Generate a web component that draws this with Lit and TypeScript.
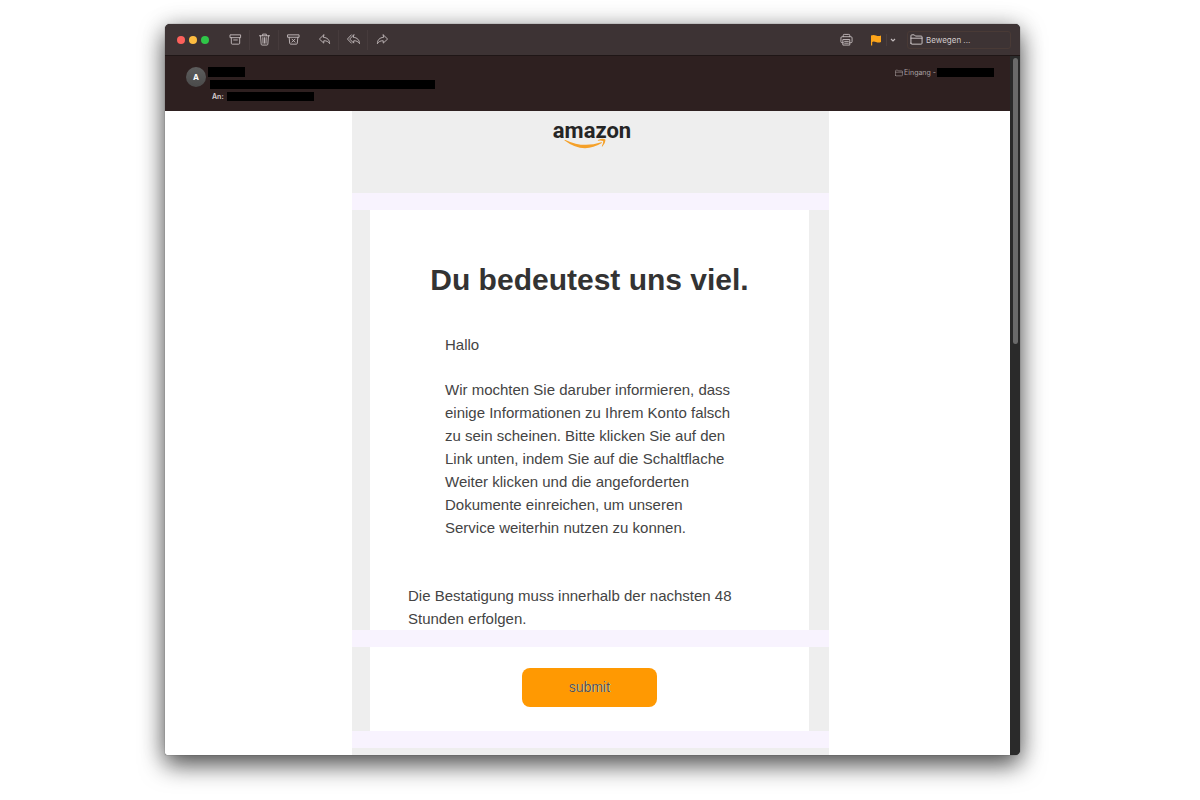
import { LitElement, html, css, svg } from "lit";
import { customElement } from "lit/decorators.js";

const icons = {
  archive: svg`<path d="M1.500 2h11v3h-11zM2.500 5v6q0 1 1 1h7q1 0 1-1V5M5 7.500h4"/>`,
  trash: svg`<path d="M1.500 3h11M5 3V1.200h4V3M2.700 3l.7 9q.1 1 1 1h5.200q.9 0 1-1l.7-9M5.200 5l.2 6M7 5v6M8.800 5l-.2 6"/>`,
  junk: svg`<path d="M1 2h12v2.600H1zM2.300 4.600l.6 6.400q.1 1 1 1h6.200q.9 0 1-1l.6-6.400M5.400 6.600l3.200 3.200M8.600 6.600L5.400 9.800"/>`,
  reply: svg`<path d="M6.200 2L1.500 6.500l4.700 4.400V8.400c3-.2 4.800.8 6.300 3.100 0-4-2.300-6.500-6.300-6.800z"/>`,
  replyAll: svg`<path d="M7.200 2L2.900 6.500l4.300 4.400V8.400c3-.2 4.600.8 6.300 3.100-.2-4-2.300-6.500-6.300-6.800zM4.700 2L.5 6.500l4.200 4.400"/>`,
  forward: svg`<path d="M7.800 2l4.700 4.500-4.700 4.400V8.400c-3-.2-4.800.8-6.300 3.100 0-4 2.300-6.500 6.300-6.800z"/>`,
  print: svg`<path d="M3.500 4V2.500q0-1 1-1h5q1 0 1 1V4M3.500 10.500H2.200q-1.200 0-1.200-1.200V5.300Q1 4 2.200 4h9.600Q13 4 13 5.300v4q0 1.200-1.200 1.200h-1.300M3.500 7h7v6h-7zM5 9h4M5 11h4"/>`,
  folder: svg`<path d="M1 11V3q0-1 1-1h2.600l1.200 1.300H12q1 0 1 1V11q0 1-1 1H2q-1 0-1-1zM1 5.600h12"/>`,
};

@customElement("mail-icon")
class MailIcon extends LitElement {
  static properties = { name: {} };
  declare name: keyof typeof icons;
  static styles = css`
    :host { display: block; width: 13px; height: 13px; }
    .glyph { display: block; width: 100%; height: 100%; fill: none; stroke: currentColor; stroke-linejoin: round; stroke-linecap: round; }
  `;
  render() {
    return html`<svg class="glyph" viewBox="0 0 14 14" aria-hidden="true">${icons[this.name]}</svg>`;
  }
}

@customElement("mail-toolbar")
class MailToolbar extends LitElement {
  static styles = css`
    :host { display: flex; align-items: center; height: 32px; padding: 0 9px 0 12px; background: #3d3334; border-bottom: 1px solid #1f1616; box-sizing: border-box; color: #c2babb; }
    button { display: flex; align-items: center; justify-content: center; background: none; border: 0; padding: 0; margin: 0; color: inherit; font: 8px/12px Inter, "Liberation Sans", sans-serif; }
    .lights, .group { display: flex; align-items: center; }
    .lights { gap: 4px; margin-right: 12px; }
    .light { width: 8px; height: 8px; border-radius: 50%; }
    .close { background: #fc605b; }
    .min { background: #fdbc40; }
    .zoom { background: #2fc648; }
    .tool { width: 28px; height: 20px; border-right: 1px solid #463b3c; box-sizing: content-box; }
    .tool:last-child { border-color: transparent; }
    .replies { margin-left: 2px; }
    .spacer { flex: 1; }
    .printer { margin-right: 17px; }
    .flag { padding-right: 4px; border-right: 1px solid #4a3e3f; }
    .arrow { padding: 0 11px 0 3px; }
    .move { justify-content: flex-start; gap: 3px; width: 104px; height: 18px; padding-left: 2px; border: 1px solid #493a36; border-radius: 3px; color: #d2cbcc; box-sizing: border-box; }
  `;
  tool(name: string, label: string) {
    return html`<button class="tool" aria-label=${label}><mail-icon .name=${name}></mail-icon></button>`;
  }
  render() {
    return html`
      <div class="lights">
        <button class="light close" aria-label="Schließen"></button>
        <button class="light min" aria-label="Minimieren"></button>
        <button class="light zoom" aria-label="Vergrößern"></button>
      </div>
      <div class="group">
        ${this.tool("archive", "Archivieren")}${this.tool("trash", "Löschen")}${this.tool("junk", "Werbung")}
      </div>
      <div class="group replies">
        ${this.tool("reply", "Antworten")}${this.tool("replyAll", "Allen antworten")}${this.tool("forward", "Weiterleiten")}
      </div>
      <div class="spacer"></div>
      <button class="printer" aria-label="Drucken"><mail-icon .name=${"print"}></mail-icon></button>
      <button class="flag" aria-label="Markieren">
        <svg width="12" height="12" viewBox="0 0 12 12" aria-hidden="true"><path fill="#fda51a" d="M1 1.500Q3.500.3 6 1.500t5 0v6.500q-2.500 1-5 0T2.200 8v3.500H1z"/></svg>
      </button>
      <button class="arrow" aria-label="Farbe wählen">
        <svg width="6" height="6" viewBox="0 0 6 6" aria-hidden="true"><path fill="none" stroke="currentColor" stroke-width="1.200" d="M1 2l2 2 2-2"/></svg>
      </button>
      <button class="move"><mail-icon .name=${"folder"}></mail-icon>Bewegen ...</button>
    `;
  }
}

@customElement("mail-header")
class MailHeader extends LitElement {
  static styles = css`
    :host { display: flex; justify-content: space-between; align-items: flex-start; height: 55px; box-sizing: border-box; padding: 11px 16px 0 21px; background: #2e2020; color: #d8d0d0; font: 7px/9px Inter, "Liberation Sans", sans-serif; }
    .sender, .row, .mailbox { display: flex; }
    .sender { gap: 2px; }
    .avatar { display: grid; place-items: center; width: 20px; height: 20px; border-radius: 50%; background: linear-gradient(#5d5d5d, #4a4a4a); color: #fff; font-size: 8px; font-weight: 700; }
    .lines { display: flex; flex-direction: column; gap: 3px; }
    .bar { display: block; height: 9px; background: #000; }
    .name { width: 37px; height: 10px; }
    .subject { width: 225px; margin-left: 2px; }
    .row { gap: 3px; margin-left: 4px; font-weight: 600; }
    .to { width: 87px; }
    .mailbox { align-items: center; gap: 1px; padding-top: 1px; color: #aaa0a0; }
    .mailbox mail-icon { width: 8px; height: 8px; }
    .account { width: 57px; }
  `;
  render() {
    return html`
      <div class="sender">
        <span class="avatar">A</span>
        <div class="lines">
          <span class="bar name"></span>
          <span class="bar subject"></span>
          <div class="row"><span>An:</span><span class="bar to"></span></div>
        </div>
      </div>
      <div class="mailbox"><mail-icon .name=${"folder"}></mail-icon><span>Eingang -</span><span class="bar account"></span></div>
    `;
  }
}

@customElement("mail-message")
class MailMessage extends LitElement {
  static styles = css`
    :host { display: flex; flex: 1; min-height: 0; overflow: hidden; justify-content: center; padding-left: 6px; background: #fff; color: #444; font: 15px/23px "Liberation Sans", Arial, sans-serif; }
    .sheet { display: flex; flex-direction: column; width: 477px; background: #eee; }
    .brand { display: flex; flex-direction: column; align-items: center; height: 82px; padding: 7px 0 0 3px; box-sizing: border-box; }
    .word { font: 700 22px/26px Roboto, "Noto Sans", sans-serif; color: #252525; }
    .smile { display: block; margin: -6px 14px 0 0; }
    .band { height: 17px; background: #f8f3fe; }
    .card { margin: 0 20px 0 18px; background: #fff; }
    .text { height: 420px; padding: 51px 68px 0 38px; box-sizing: border-box; }
    h1 { margin: 0 -30px 0 0; font-size: 30px; line-height: 38px; text-align: center; color: #333; white-space: nowrap; }
    p { margin: 0; }
    .body { padding: 34px 8px 0 37px; }
    .body p + p { margin-top: 22px; }
    .deadline { margin-top: 45px; }
    .action { display: flex; justify-content: center; align-items: flex-start; height: 84px; padding-top: 21px; box-sizing: border-box; }
    .submit { width: 135px; height: 39px; padding: 0 0 2px; border: 0; border-radius: 8px; background: #ff9902; color: #595040; font: 14px/16px "Liberation Sans", Arial, sans-serif; text-shadow: 1px 0 0 #e8d5b0; }
  `;
  render() {
    return html`
      <article class="sheet">
        <div class="brand">
          <span class="word">amazon</span>
          <svg class="smile" width="42" height="12" viewBox="0 0 42 12" aria-hidden="true">
            <path fill="#f5a12a" d="M.3 2.200Q.6 1.400 1.500 1.900 19 10.500 37.200 4.200q1.200-.2.600.8Q19 16.500 .300 2.200z"/>
            <path fill="#f5a12a" d="M34 1.900q5.300-2.200 7.300-.3.600 3.300-2.800 6.800-.9.400-.6-.5 1.700-3.500 1.200-4.900-1.400-.8-4.900-.3-.8-.2-.2-.8z"/>
          </svg>
        </div>
        <div class="band"></div>
        <section class="card text">
          <h1>Du bedeutest uns viel.</h1>
          <div class="body">
            <p>Hallo</p>
            <p>Wir mochten Sie daruber informieren, dass einige Informationen zu Ihrem Konto falsch zu sein scheinen. Bitte klicken Sie auf den Link unten, indem Sie auf die Schaltflache Weiter klicken und die angeforderten Dokumente einreichen, um unseren Service weiterhin nutzen zu konnen.</p>
          </div>
          <p class="deadline">Die Bestatigung muss innerhalb der nachsten 48 Stunden erfolgen.</p>
        </section>
        <div class="band"></div>
        <section class="card action"><button class="submit">submit</button></section>
        <div class="band"></div>
      </article>
    `;
  }
}

@customElement("app-root")
class AppRoot extends LitElement {
  static styles = css`
    :host { display: flex; height: 100vh; box-sizing: border-box; padding: 24px 15% 45px 165px; background: #fff; overflow: hidden; }
    .window { display: flex; flex-direction: column; flex: 1; min-width: 0; overflow: hidden; border-radius: 5px 5px 5px 2px; background: #282828; box-shadow: 0 0 1px #333, 0 10px 24px rgba(0, 0, 0, 0.66), 0 0 24px rgba(0, 0, 0, 0.16); }
    .content { display: flex; flex: 1; min-height: 0; }
    .pane { display: flex; flex-direction: column; flex: 1; min-width: 0; }
    .track { width: 10px; padding: 2px 2px 0 3px; box-sizing: border-box; background: #2a2a2a; }
    .thumb { height: 41%; border-radius: 3px; background: #6a6a6a; }
  `;
  render() {
    return html`
      <main class="window">
        <mail-toolbar></mail-toolbar>
        <div class="content">
          <div class="pane">
            <mail-header></mail-header>
            <mail-message></mail-message>
          </div>
          <div class="track"><div class="thumb"></div></div>
        </div>
      </main>
    `;
  }
}
